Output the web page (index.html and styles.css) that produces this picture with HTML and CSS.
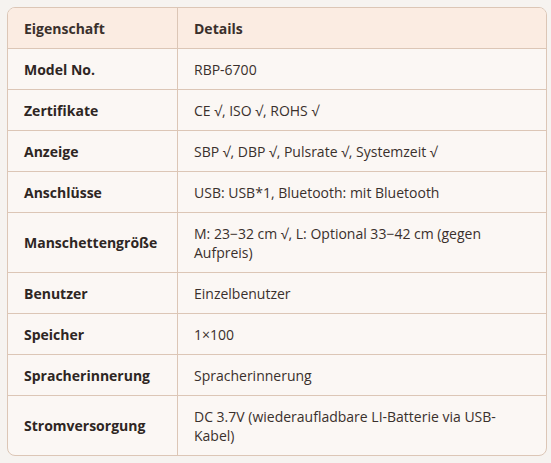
FILE: index.html
```html
<!DOCTYPE html>
<html lang="de">
<head>
<meta charset="utf-8">
<link rel="stylesheet" href="styles.css">
</head>
<body>
<div class="spec">
<table class="spec-table">
<thead>
<tr><th class="col-prop">Eigenschaft</th><th>Details</th></tr>
</thead>
<tbody>
<tr><td class="prop">Model No.</td><td>RBP-6700</td></tr>
<tr><td class="prop">Zertifikate</td><td>CE √, ISO √, ROHS √</td></tr>
<tr><td class="prop">Anzeige</td><td>SBP √, DBP √, Pulsrate √, Systemzeit √</td></tr>
<tr><td class="prop">Anschlüsse</td><td>USB: USB*1, Bluetooth: mit Bluetooth</td></tr>
<tr><td class="prop">Manschettengröße</td><td>M: 23−32 cm √, L: Optional 33−42 cm (gegen Aufpreis)</td></tr>
<tr><td class="prop">Benutzer</td><td>Einzelbenutzer</td></tr>
<tr><td class="prop">Speicher</td><td>1×100</td></tr>
<tr><td class="prop">Spracherinnerung</td><td>Spracherinnerung</td></tr>
<tr><td class="prop">Stromversorgung</td><td>DC 3.7V (wiederaufladbare LI-Batterie via USB-Kabel)</td></tr>
</tbody>
</table>
</div>
</body>
</html>
```
FILE: styles.css
```css
html, body {
  margin: 0;
  padding: 0;
  background: #f6f3f0;
}
body {
  padding: 7px 4px 6px 7px;
  font-family: "Open Sans", "Liberation Sans", sans-serif;
  font-size: 14px;
  color: #3a302c;
}
.spec {
  width: 538px;
  border: 1px solid #dcc6b6;
  border-radius: 8px;
  overflow: hidden;
  background: #fbf7f4;
}
.spec-table {
  width: 100%;
  border-collapse: collapse;
  table-layout: fixed;
}
.spec-table th,
.spec-table td {
  padding: 10.5px 16px;
  line-height: 19px;
  text-align: left;
  vertical-align: middle;
  border-bottom: 1px solid #dcc6b6;
}
.spec-table th:first-child,
.spec-table td:first-child {
  width: 137px;
  border-right: 1px solid #dcc6b6;
}
.spec-table tr:last-child td {
  border-bottom: none;
}
.spec-table thead th {
  background: #fbece2;
  font-weight: 700;
  color: #3a302c;
}
.prop {
  font-weight: 700;
  color: #2e2623;
}
```
